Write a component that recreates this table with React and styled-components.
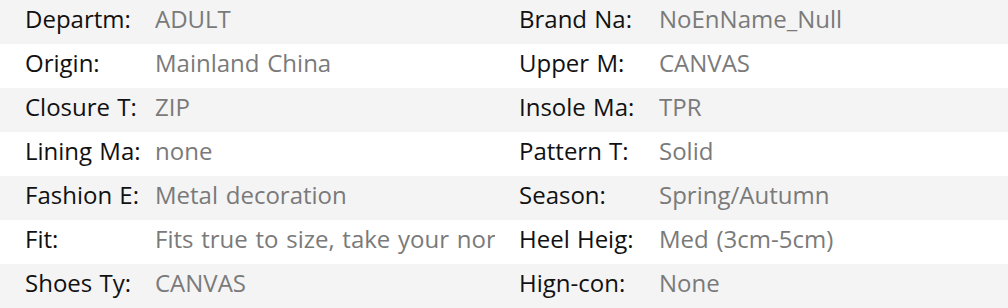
import React from "react";
import styled, { createGlobalStyle } from "styled-components";

const Global = createGlobalStyle`
  html, body { margin: 0; padding: 0; background: #fff; }
  body { font-family: "Open Sans", "Noto Sans", sans-serif; }
  * { box-sizing: border-box; }
`;

const Table = styled.div`
  width: 1008px;
  display: flex;
  flex-direction: column;
`;

const Row = styled.div`
  height: 44px;
  display: grid;
  grid-template-columns: 470px 1fr;
  column-gap: 24px;
  padding: 0 0 6px 25px;
  align-items: center;
  background: ${(p) => (p.$shaded ? "#f4f4f4" : "#ffffff")};
`;

const Pair = styled.div`
  display: grid;
  grid-template-columns: ${(p) => p.$labelWidth}px 1fr;
  align-items: center;
  min-width: 0;
`;

const Label = styled.span`
  font-size: 24px;
  word-spacing: 1px;
  color: #111;
  white-space: nowrap;
  overflow: hidden;
  line-height: 36px;
`;

const Value = styled.span`
  font-size: 24px;
  word-spacing: 1.5px;
  color: #7a7a7a;
  white-space: nowrap;
  overflow: hidden;
  line-height: 36px;
`;

const rows = [
  ["Departm:", "ADULT", "Brand Na:", "NoEnName_Null"],
  ["Origin:", "Mainland China", "Upper M:", "CANVAS"],
  ["Closure T:", "ZIP", "Insole Ma:", "TPR"],
  ["Lining Ma:", "none", "Pattern T:", "Solid"],
  ["Fashion E:", "Metal decoration", "Season:", "Spring/Autumn"],
  ["Fit:", "Fits true to size, take your nor", "Heel Heig:", "Med (3cm-5cm)"],
  ["Shoes Ty:", "CANVAS", "Hign-con:", "None"],
];

export default function App() {
  return (
    <>
      <Global />
      <Table>
        {rows.map((r, i) => (
          <Row key={i} $shaded={i % 2 === 0}>
            <Pair $labelWidth={130}>
              <Label>{r[0]}</Label>
              <Value>{r[1]}</Value>
            </Pair>
            <Pair $labelWidth={140}>
              <Label>{r[2]}</Label>
              <Value>{r[3]}</Value>
            </Pair>
          </Row>
        ))}
      </Table>
    </>
  );
}
